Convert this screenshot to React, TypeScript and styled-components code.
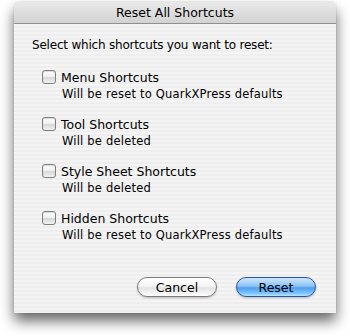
import React from "react";
import styled, { createGlobalStyle } from "styled-components";

const GlobalStyle = createGlobalStyle`
  html, body {
    margin: 0;
    padding: 0;
    background: #ffffff;
  }
  body {
    width: 350px;
    height: 336px;
    overflow: hidden;
    font-family: "DejaVu Sans", "Liberation Sans", sans-serif;
    color: #000;
  }
`;

const StyledPage = styled.div`
  padding: 2px 14px 0;
`;

const StyledWindow = styled.div`
  width: 322px;
  height: 311px;
  display: flex;
  flex-direction: column;
  border-radius: 5px 5px 0 0;
  overflow: hidden;
  box-shadow: 0 8px 14px rgba(0, 0, 0, 0.6), 0 0 1px rgba(0, 0, 0, 0.4);
  background: repeating-linear-gradient(
    to bottom,
    #eeeeee 0,
    #eeeeee 2px,
    #f4f4f4 2px,
    #f4f4f4 4px
  );
`;

const StyledTitleBar = styled.div`
  height: 21px;
  display: flex;
  align-items: center;
  justify-content: center;
  font-size: 12.5px;
  background: linear-gradient(to bottom, #e9e9e9, #d2d2d2);
  border-bottom: 1px solid #8f8f8f;
`;

const StyledBody = styled.div`
  flex: 1;
  display: flex;
  flex-direction: column;
  padding: 13px 20px 16px 18px;
`;

const StyledPrompt = styled.div`
  font-size: 12px;
  letter-spacing: -0.2px;
  line-height: 16px;
  margin-bottom: 16px;
`;

const StyledGroup = styled.div`
  display: flex;
  flex-direction: column;
  padding-left: 10px;
  margin-bottom: 15px;
`;

const StyledRow = styled.label`
  display: flex;
  align-items: center;
  gap: 5px;
  height: 16px;
  font-size: 12.5px;
`;

const StyledCheckbox = styled.span`
  width: 12px;
  height: 12px;
  border: 1px solid #7e7e7e;
  border-radius: 3px;
  background: linear-gradient(to bottom, #ffffff 0%, #f0f0f0 45%, #d8d8d8 55%, #f2f2f2 100%);
  box-shadow: inset 0 1px 1px rgba(0, 0, 0, 0.15);
`;

const StyledNote = styled.div`
  margin: 2px 0 0 20px;
  font-size: 11.5px;
  letter-spacing: 0.2px;
  line-height: 14px;
`;

const StyledButtons = styled.div`
  margin-top: auto;
  display: flex;
  justify-content: flex-end;
  gap: 19px;
`;

const StyledButton = styled.button<{ $primary?: boolean }>`
  width: 80px;
  height: 20px;
  padding: 0;
  border-radius: 10px;
  font-family: inherit;
  font-size: 12.5px;
  color: #000;
  border: 1px solid ${(p) => (p.$primary ? "#2a55a0" : "#7b7b7b")};
  background: ${(p) =>
    p.$primary
      ? "linear-gradient(to bottom, #cfe6fd 0%, #8cc3f6 45%, #4f9ded 55%, #7fc6ff 85%, #b9e6ff 100%)"
      : "linear-gradient(to bottom, #ffffff 0%, #f4f4f4 45%, #e2e2e2 55%, #f5f5f5 85%, #ffffff 100%)"};
  box-shadow: 0 1px 2px rgba(0, 0, 0, 0.25);
`;

const items = [
  { label: "Menu Shortcuts", note: "Will be reset to QuarkXPress defaults" },
  { label: "Tool Shortcuts", note: "Will be deleted" },
  { label: "Style Sheet Shortcuts", note: "Will be deleted" },
  { label: "Hidden Shortcuts", note: "Will be reset to QuarkXPress defaults" },
];

const App = () => {
  return (
    <StyledPage>
      <GlobalStyle />
      <StyledWindow>
        <StyledTitleBar>Reset All Shortcuts</StyledTitleBar>
        <StyledBody>
          <StyledPrompt>Select which shortcuts you want to reset:</StyledPrompt>
          {items.map((item) => (
            <StyledGroup key={item.label}>
              <StyledRow>
                <StyledCheckbox />
                {item.label}
              </StyledRow>
              <StyledNote>{item.note}</StyledNote>
            </StyledGroup>
          ))}
          <StyledButtons>
            <StyledButton>Cancel</StyledButton>
            <StyledButton $primary>Reset</StyledButton>
          </StyledButtons>
        </StyledBody>
      </StyledWindow>
    </StyledPage>
  );
};

export default App;
